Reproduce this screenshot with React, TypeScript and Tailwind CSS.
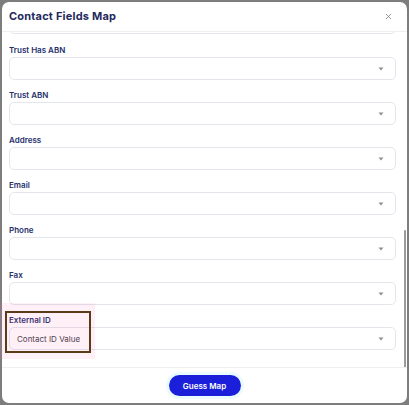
import { X } from "lucide-react";

const fields = ["Trust Has ABN", "Trust ABN", "Address", "Email", "Phone", "Fax", "External ID"];

function Caret() {
  return (
    <svg width="6" height="4" viewBox="0 0 6 4" className="shrink-0">
      <path d="M0.5 0.5 L5.5 0.5 L3 3.5 Z" fill="#8c8f96" />
    </svg>
  );
}

function SelectBox({ value }: { value?: string }) {
  return (
    <div className="h-[23px] rounded-[5px] border border-[#e3e6eb] bg-white flex items-center justify-between pl-[7px] pr-[11px]">
      <span className="text-[8px] text-[#3a3d45]">{value ?? ""}</span>
      <Caret />
    </div>
  );
}

export default function App() {
  return (
    <div
      className="relative w-[409px] h-[405px] bg-[#7d7d7d] p-[2px]"
      style={{ fontFamily: "Inter, 'Noto Sans', sans-serif" }}
    >
      <div className="relative h-full bg-white rounded-[7px] flex flex-col overflow-hidden">
        {/* Header */}
        <div className="h-[29px] shrink-0 flex items-center justify-between pl-[7px] pr-[14px]">
          <h2 className="text-[11px] font-bold text-[#1f2a5e] tracking-[0.2px]">Contact Fields Map</h2>
          <X className="h-[9px] w-[9px] text-[#777]" strokeWidth={2} />
        </div>

        {/* Body */}
        <div className="relative flex-1 overflow-hidden border-t border-[#edf0f3]">
          <div className="pl-[7px] pr-[11px]">
            <div className="-mt-[21px]">
              <SelectBox />
            </div>
            {fields.map((f, i) => (
              <div key={f} className={i === 0 ? "mt-[11px]" : "mt-[10px]"}>
                <div className="h-[10px] leading-[10px] text-[8px] font-semibold text-[#25306b] mb-[2px]">{f}</div>
                <SelectBox value={f === "External ID" ? "Contact ID Value" : undefined} />
              </div>
            ))}
          </div>
          {/* scrollbar */}
          <div className="absolute right-[1px] top-[198px] w-[2px] h-[138px] rounded-full bg-[#9a9a9a]" />
        </div>

        {/* Footer */}
        <div className="h-[36px] shrink-0 border-t border-[#eceef1] flex items-center justify-center">
          <button className="h-[21px] w-[72px] rounded-full bg-[#1b1fd9] text-white text-[8px] font-semibold shadow-[0_0_0_3px_#e9fbfd]">
            Guess Map
          </button>
        </div>
      </div>

      {/* highlight overlay */}
      <div className="absolute left-0 top-[303px] w-[95px] h-[56px] bg-[#ff5fb0]/10" />
      <div className="absolute left-[5px] top-[311px] w-[86px] h-[42px] border-2 border-[#5b3b17]" />
    </div>
  );
}
